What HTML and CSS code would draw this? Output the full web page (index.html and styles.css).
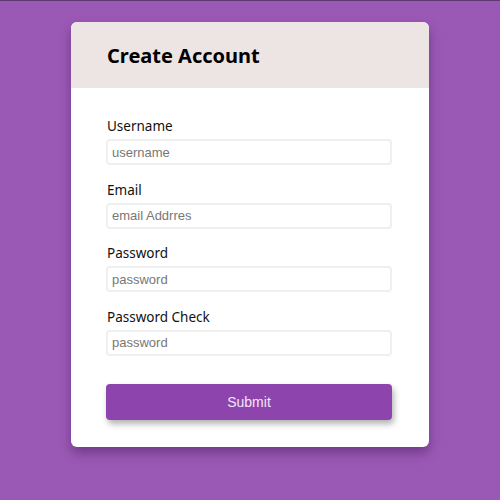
FILE: index.html
```html
<!DOCTYPE html>
<html>
<head>
<meta charset="utf-8">
<link rel="stylesheet" href="styles.css">
</head>
<body>
<div class="card">
  <div class="card-header"><h1 class="title">Create Account</h1></div>
  <form class="card-body">
    <div class="field">
      <label class="label">Username</label>
      <input class="input" type="text" placeholder="username">
    </div>
    <div class="field">
      <label class="label">Email</label>
      <input class="input" type="text" placeholder="email Addrres">
    </div>
    <div class="field">
      <label class="label">Password</label>
      <input class="input" type="password" placeholder="password">
    </div>
    <div class="field">
      <label class="label">Password Check</label>
      <input class="input" type="password" placeholder="password">
    </div>
    <button class="submit" type="button">Submit</button>
  </form>
</div>
</body>
</html>
```
FILE: styles.css
```css
html, body { margin: 0; padding: 0; }
body {
  background: #9b59b6;
  border-top: 1px solid #5e3a70;
  height: 499px;
  font-family: "Noto Sans", "Open Sans", sans-serif;
}
.card {
  width: 358px;
  margin: 21px 0 0 71px;
  background: #fff;
  border-radius: 6px;
  overflow: hidden;
  box-shadow: 0 6px 12px rgba(60, 20, 80, 0.45);
}
.card-header {
  background: #ede4e4;
  height: 66px;
  display: flex;
  align-items: center;
  padding-left: 36px;
}
.title {
  margin: 0;
  font-size: 20px;
  font-weight: 700;
  color: #000;
}
.card-body {
  display: flex;
  flex-direction: column;
  padding: 29px 37px 27px 35px;
}
.field {
  display: flex;
  flex-direction: column;
  margin-bottom: 15.5px;
}
.label {
  font-size: 13.5px;
  line-height: 19px;
  color: #111;
  margin-bottom: 3px;
  padding-left: 1px;
}
.input {
  height: 26px;
  box-sizing: border-box;
  border: 2px solid #efefef;
  border-radius: 4px;
  padding: 0 4px;
  font-family: "Liberation Sans", Arial, sans-serif;
  font-size: 13px;
  color: #333;
  outline: none;
}
.input::placeholder { color: #777; }
.submit {
  margin-top: 13px;
  height: 36px;
  border: none;
  border-radius: 4px;
  background: #8e44ad;
  color: #f3e6f7;
  font-family: "Liberation Sans", Arial, sans-serif;
  font-size: 14px;
  box-shadow: 2px 4px 6px rgba(0, 0, 0, 0.3);
}
```
